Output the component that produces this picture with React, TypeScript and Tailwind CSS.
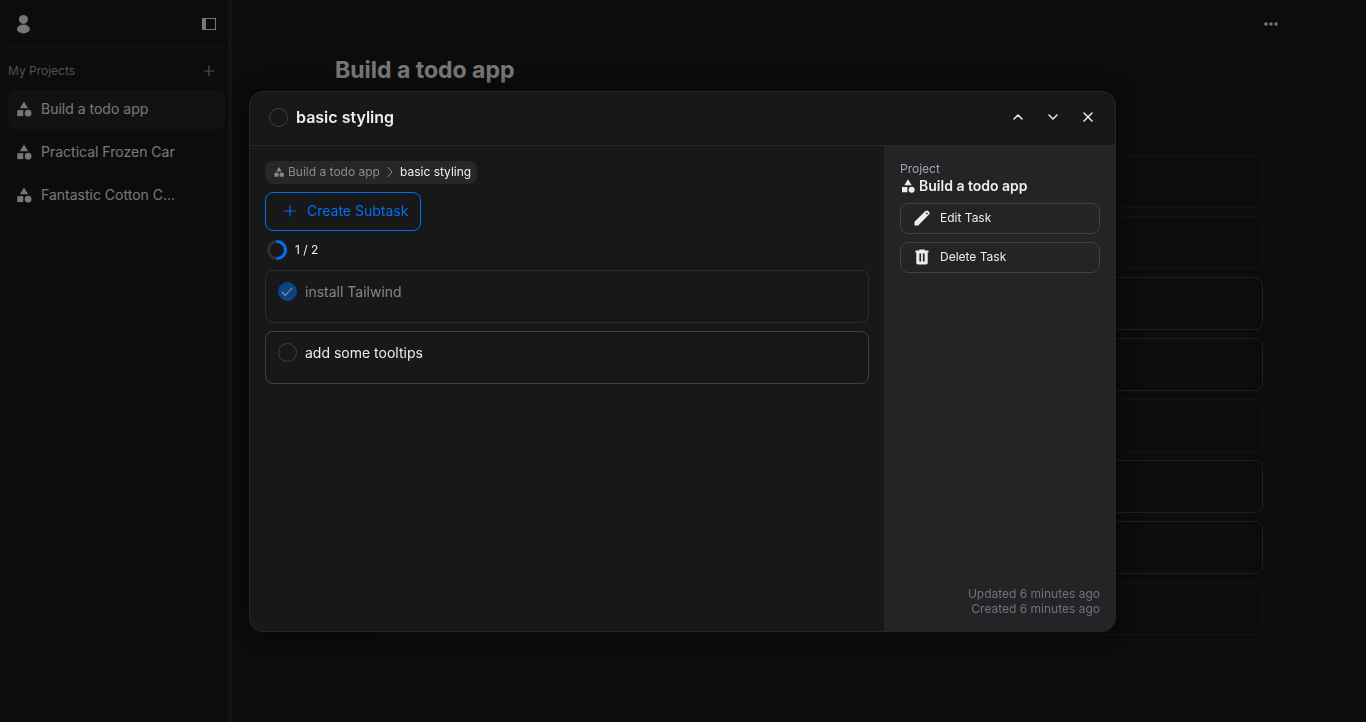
import React from "react";
import { MdCategory } from "react-icons/md";

const tasks = [
  { id: 1, done: true },
  { id: 2, done: true },
  { id: 3, done: false },
  { id: 4, done: false },
  { id: 5, done: true },
  { id: 6, done: false },
  { id: 7, done: false },
  { id: 8, done: true },
];

const projects = ["Build a todo app", "Practical Frozen Car", "Fantastic Cotton C..."];

function UserIcon() {
  return (
    <svg viewBox="0 0 22 22" className="size-[22px]" fill="currentColor" aria-hidden="true">
      <circle cx="11.4" cy="6.4" r="4.5" />
      <ellipse cx="11.4" cy="16" rx="6.5" ry="4.4" />
    </svg>
  );
}

function PanelIcon() {
  return (
    <svg viewBox="0 0 16 14" className="h-3.5 w-4" aria-hidden="true">
      <rect x="1.5" y="1.5" width="13" height="11" fill="none" stroke="currentColor" strokeWidth="1" />
      <path d="M1 1h4v12H1z" fill="currentColor" />
    </svg>
  );
}

function PlusIcon() {
  return (
    <svg viewBox="0 0 12 12" className="size-3" fill="none" stroke="currentColor" strokeWidth="1.2" strokeLinecap="round" aria-hidden="true">
      <path d="M6 1v10M1 6h10" />
    </svg>
  );
}

function Chevron({ d }: { d: string }) {
  return (
    <svg viewBox="0 0 14 14" className="size-3.5" fill="none" stroke="currentColor" strokeWidth="1.5" strokeLinecap="round" strokeLinejoin="round" aria-hidden="true">
      <path d={d} />
    </svg>
  );
}

function EditIcon() {
  return (
    <svg viewBox="0 0 20 20" className="size-5" fill="currentColor" aria-hidden="true">
      <path fillRule="evenodd" d="M2.5 17.5v-3.7L13.4 3c.8-.8 2-.8 2.8 0l.8.8c.8.8.8 2 0 2.8L6.2 17.5zM14.2 4.7a.9.9 0 1 0 1.3 1.3.9.9 0 0 0-1.3-1.3z" />
    </svg>
  );
}

function TrashIcon() {
  return (
    <svg viewBox="0 0 20 20" className="size-5" fill="currentColor" aria-hidden="true">
      <path fillRule="evenodd" d="M3.5 3.5h3.7V2.5h5.6v1h3.7v2h-.8v10.3c0 1-.7 1.7-1.7 1.7H6c-1 0-1.7-.7-1.7-1.7V5.5h-.8zM7.4 6.5v8h1.7v-8zM10.9 6.5v8h1.7v-8z" />
    </svg>
  );
}

function TaskCheck({ label, checked }: { label: string; checked?: boolean }) {
  return (
    <span className="grid size-[19px] shrink-0 place-items-center">
      <input
        type="checkbox"
        aria-label={label}
        defaultChecked={checked}
        className="peer col-start-1 row-start-1 size-[19px] appearance-none rounded-full border border-[#3f3f46] checked:border-[#006fee] checked:bg-[#006fee]"
      />
      <svg viewBox="0 0 20 20" className="pointer-events-none col-start-1 row-start-1 hidden size-[19px] peer-checked:block" fill="none" stroke="white" strokeWidth="1.2" strokeLinecap="round" strokeLinejoin="round" aria-hidden="true">
        <path d="M4.5 10.8l3.2 3.4 6.8-7.7" />
      </svg>
    </span>
  );
}

function Sidebar() {
  return (
    <aside className="flex w-[232px] shrink-0 flex-col border-r-4 border-[#27272a] pr-[3px] pl-2">
      <div className="flex h-[47px] items-center justify-between border-b border-[#27272a] pt-px pr-2 pl-1">
        <button aria-label="Account"><UserIcon /></button>
        <button aria-label="Toggle sidebar"><PanelIcon /></button>
      </div>
      <div className="flex h-[43px] items-center justify-between pt-1 pr-[10px] text-[#a1a1aa]">
        <h2 className="text-xs">My Projects</h2>
        <button aria-label="Add project"><PlusIcon /></button>
      </div>
      <nav className="flex flex-col gap-1">
        {projects.map((name, i) => (
          <a
            key={name}
            href="#"
            className={
              i === 0
                ? "flex h-[39px] items-center gap-2 rounded-lg bg-[#242427] px-[7px] pb-px text-sm"
                : "flex h-[39px] items-center gap-2 rounded-lg px-[7px] pb-px text-sm"
            }
          >
            <MdCategory className="size-[18px]" />
            {name}
          </a>
        ))}
      </nav>
    </aside>
  );
}

function TaskDialog() {
  return (
    <section role="dialog" aria-modal="true" aria-labelledby="task-title" className="flex h-[75vh] w-full max-w-[867px] flex-col overflow-hidden rounded-[14px] border border-[#27272a] bg-[#18181b] text-[#ecedee] shadow-[0_0_20px_rgba(0,0,0,0.6)]">
      <header className="flex h-[54px] shrink-0 items-center gap-2 border-b border-[#27272a] pr-5 pb-0.5 pl-[19px]">
        <TaskCheck label="Complete basic styling" />
        <h2 id="task-title" className="flex-1 text-base font-semibold">basic styling</h2>
        <div className="flex gap-[21px]">
          <button aria-label="Previous task"><Chevron d="M3 9l4-4 4 4" /></button>
          <button aria-label="Next task"><Chevron d="M3 5l4 4 4-4" /></button>
          <button aria-label="Close"><Chevron d="M3 3l8 8M11 3l-8 8" /></button>
        </div>
      </header>
      <div className="flex min-h-0 flex-1">
        <div className="flex flex-1 flex-col items-start p-[15px]">
          <nav aria-label="Breadcrumb" className="flex h-[23px] items-center rounded-lg bg-[#27272a] pr-1.5 pl-2 text-xs">
            <a href="#" className="flex items-center gap-[3px] text-[#8b8b8f]"><MdCategory className="size-3" />Build a todo app</a>
            <span className="px-[3px] text-[#8b8b8f]">
              <svg viewBox="0 0 14 14" className="size-3.5" fill="none" stroke="currentColor" strokeLinecap="round" strokeLinejoin="round" aria-hidden="true"><path d="M5 2.5L9 7l-4 4.5" /></svg>
            </span>
            <span>basic styling</span>
          </nav>
          <button className="mt-2 flex h-[39px] items-center gap-[11px] rounded-lg border border-[#006fee] pr-3 pl-[18px] text-sm text-[#006fee]">
            <PlusIcon />Create Subtask
          </button>
          <div className="flex h-[39px] items-center gap-2 pl-0.5 text-xs">
            <svg viewBox="0 0 20 20" className="size-5" fill="none" strokeWidth="3" aria-hidden="true">
              <circle cx="10" cy="10" r="8.5" stroke="#303035" />
              <path d="M9.5 1.5h.5a8.5 8.5 0 0 1 0 17h-.5" stroke="#006fee" />
            </svg>
            1 / 2
          </div>
          <ul className="flex w-full flex-col gap-2 text-sm">
            <li className="flex h-[53px] items-start gap-2 rounded-lg border border-[#3f3f46] px-3 pt-[11px] opacity-50">
              <TaskCheck label="Complete install Tailwind" checked />install Tailwind
            </li>
            <li className="flex h-[53px] items-start gap-2 rounded-lg border border-[#3f3f46] px-3 pt-[11px]">
              <TaskCheck label="Complete add some tooltips" />add some tooltips
            </li>
          </ul>
        </div>
        <aside className="flex w-[231px] shrink-0 flex-col bg-[#242427] py-[15px] pr-[15px] pl-4 text-xs">
          <p className="text-[#a1a1aa]">Project</p>
          <p className="flex items-center gap-[3px] text-sm leading-[18px] font-semibold"><MdCategory className="size-4" />Build a todo app</p>
          <div className="mt-2 flex flex-col gap-2">
            <button className="flex h-[31px] items-center gap-2 rounded-lg border border-[#3f3f46] px-[11px] pb-px"><EditIcon />Edit Task</button>
            <button className="flex h-[31px] items-center gap-2 rounded-lg border border-[#3f3f46] px-[11px] pb-px"><TrashIcon />Delete Task</button>
          </div>
          <div className="mt-auto text-right leading-[15px] text-[#71717a]">
            <p>Updated 6 minutes ago</p>
            <p>Created 6 minutes ago</p>
          </div>
        </aside>
      </div>
    </section>
  );
}

export default function App() {
  return (
    <div className="flex min-h-screen bg-[#18181a] font-['Inter',sans-serif] text-[#ecedee]">
      <Sidebar />
      <main className="flex-1">
        <div className="flex h-[47px] items-center justify-end pr-[88px]">
          <button aria-label="More options">
            <svg viewBox="0 0 14 6" className="h-1.5 w-3.5" fill="currentColor" aria-hidden="true">
              <circle cx="2" cy="3" r="1.8" /><circle cx="7" cy="3" r="1.8" /><circle cx="12" cy="3" r="1.8" />
            </svg>
          </button>
        </div>
        <div className="px-[103px]">
          <h1 className="pt-[7px] text-[23px] leading-8 font-bold">Build a todo app</h1>
          <ul className="mt-[69px] ml-10 flex flex-col gap-2">
            {tasks.map((t) => (
              <li
                key={t.id}
                className={t.done ? "h-[53px] rounded-lg border border-[#27272a]" : "h-[53px] rounded-lg border border-[#3f3f46]"}
              />
            ))}
          </ul>
        </div>
      </main>
      <div className="fixed inset-0 flex items-center justify-center bg-black/50 pt-px pr-px">
        <TaskDialog />
      </div>
    </div>
  );
}
